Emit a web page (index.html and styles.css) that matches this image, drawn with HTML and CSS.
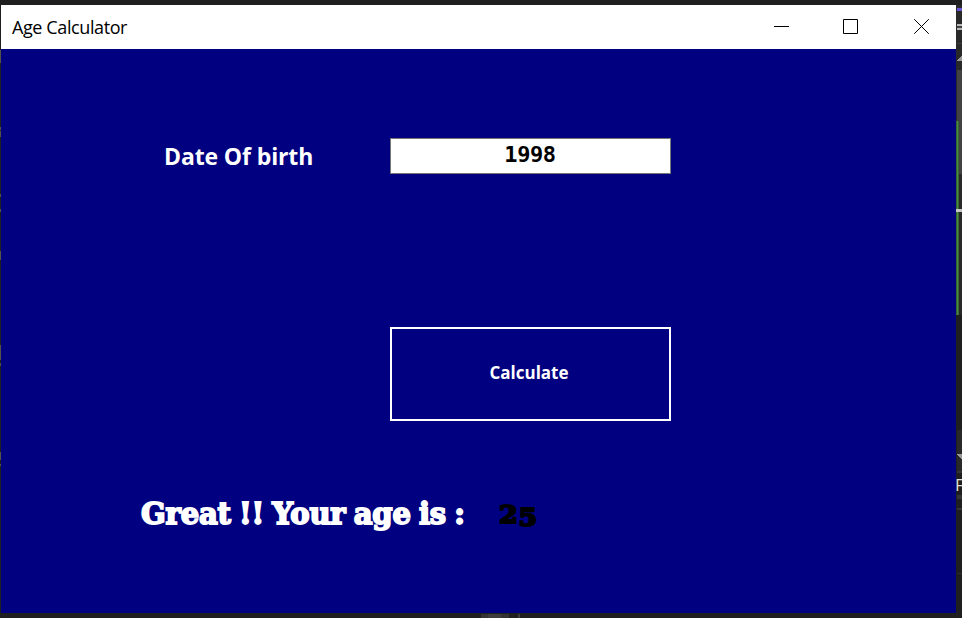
FILE: index.html
```html
<!DOCTYPE html>
<html lang="en">
<head>
<meta charset="utf-8">
<title>Age Calculator</title>
<link rel="stylesheet" href="styles.css">
</head>
<body>
<svg class="backdrop" width="962" height="618" viewBox="0 0 962 618" shape-rendering="crispEdges" aria-hidden="true">
  <rect width="962" height="618" fill="#1f1f1f"/>
  <rect x="956" y="5" width="6" height="310" fill="#292929"/>
  <rect x="957" y="8" width="5" height="3" fill="#6654d0"/>
  <rect x="957" y="24" width="5" height="6" fill="#b8b8b8"/>
  <rect x="957" y="26" width="5" height="2" fill="#444"/>
  <rect x="957" y="43" width="5" height="1" fill="#3d3d3d"/>
  <path d="M957 61L962 55V61Z" fill="#999"/>
  <rect x="957" y="70" width="5" height="104" fill="#424245"/>
  <rect x="956" y="121" width="3" height="194" fill="#37672f"/>
  <rect x="957" y="121" width="1" height="194" fill="#4d8a48"/>
  <rect x="956" y="209" width="6" height="3" fill="#c4c4c4"/>
  <rect x="957" y="430" width="5" height="42" fill="#292929"/>
  <path d="M957 454H962V460Z" fill="#999"/>
  <path d="M957 471h5v2h-5zM957 495h5v4h-5zM957 508h5v2h-5z" fill="#353535"/>
  <rect x="957" y="573" width="5" height="1" fill="#303030"/>
  <rect x="481" y="614" width="28" height="4" fill="#333"/>
  <rect x="488" y="614" width="13" height="4" fill="#3d3d3d"/>
  <rect x="518" y="614" width="2" height="4" fill="#3d3d3d"/>
  <path d="M0 50h1v13H0zM0 127h1v3H0zM0 131h1v6H0zM0 194h1v3H0zM0 209h1v3H0zM0 251h1v9H0zM0 345h1v15H0zM0 363h1v3H0zM0 452h1v8H0zM0 464h1v2H0z" fill="#555248"/>
  <text class="backdrop-letter" x="955" y="491">F</text>
</svg>
<main class="window">
  <header class="titlebar">
    <h1 class="title">Age Calculator</h1>
    <div class="controls">
      <svg width="15" height="15" viewBox="0 0 15 15" aria-label="Minimize"><path d="M0 7.5H15" stroke="#000"/></svg>
      <svg width="15" height="15" viewBox="0 0 15 15" aria-label="Maximize"><path d="M.5 .5H14.5V14.5H.5Z" fill="none" stroke="#000"/></svg>
      <svg class="close" width="15" height="15" viewBox="0 0 15 15" aria-label="Close"><path d="M.2 .2L14.8 14.8M14.8 .2L.2 14.8" stroke="#000"/></svg>
    </div>
  </header>
  <section class="form">
    <div class="field">
      <label class="label" for="birth">Date Of birth</label>
      <div class="entry" id="birth">1998</div>
    </div>
    <button class="calculate">Calculate</button>
    <div class="result">
      <span class="message">Great !! Your age is :</span>
      <span class="age">2<span class="low-digit">5</span></span>
    </div>
  </section>
</main>
</body>
</html>
```
FILE: styles.css
```css
* { box-sizing: border-box; }
body {
  margin: 0;
  width: 962px;
  height: 618px;
  padding: 5px 6px 5px 1px;
  overflow: hidden;
  background: #1f1f1f;
}
.backdrop { position: absolute; inset: 0; z-index: -1; }
.backdrop-letter { font: 17px "Open Sans", sans-serif; fill: #ddd; }
.window { width: 955px; height: 608px; background: #000080; }
.titlebar {
  display: flex;
  justify-content: space-between;
  height: 44px;
  background: #fff;
}
.title {
  margin: 0 0 0 11px;
  font: 400 18px/45px "Open Sans", sans-serif;
  letter-spacing: -0.4px;
  color: #000;
  white-space: nowrap;
}
.controls { display: flex; gap: 54px; padding: 14px 27px 0 0; }
.close { margin-left: 2px; }
.form { padding-top: 89px; }
.field { display: flex; }
.label {
  width: 389px;
  padding-left: 163px;
  font: 700 23px/37px "Open Sans", sans-serif;
  letter-spacing: -0.12px;
  color: #fff;
}
.entry {
  width: 281px;
  height: 36px;
  padding-right: 1px;
  border: 1px solid #767676;
  background: #fff;
  text-align: center;
  font: 700 22px/31px "DejaVu Sans Mono", monospace;
  letter-spacing: -0.4px;
  color: #000;
}
.calculate {
  display: block;
  width: 281px;
  height: 94px;
  margin: 152px 0 0 389px;
  padding: 0 3px 3px 0;
  border: 2px solid #fff;
  background: #000080;
  font: 700 17px "Open Sans", sans-serif;
  color: #fff;
}
.result {
  display: flex;
  margin: 68px 0 0 140px;
  font-family: "DejaVu Serif", serif;
  font-weight: 700;
  line-height: 50px;
}
.message {
  width: 358px;
  font-size: 29px;
  letter-spacing: -0.2px;
  word-spacing: -1.6px;
  color: #fff;
  white-space: nowrap;
  -webkit-text-stroke: 1.8px #fff;
}
.age {
  padding-top: 1px;
  font-size: 25px;
  letter-spacing: 0.6px;
  color: #000;
  -webkit-text-stroke: 2px #000;
  transform: scaleX(1.08);
  transform-origin: left center;
}
.low-digit { display: inline-block; transform: translateY(3px); }
```
